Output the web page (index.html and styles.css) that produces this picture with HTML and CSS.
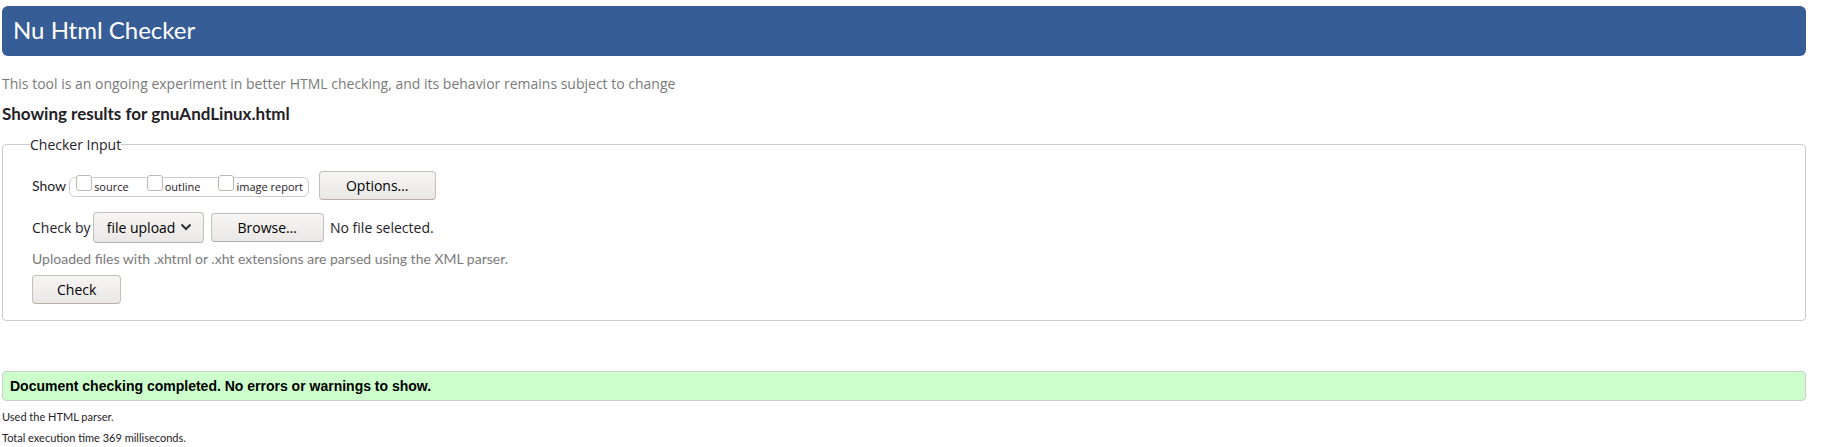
FILE: index.html
```html
<!DOCTYPE html>
<html lang="en">
<head>
<meta charset="utf-8">
<title>Nu Html Checker</title>
<link rel="stylesheet" href="styles.css">
</head>
<body>
<header class="banner"><h1 class="banner-title">Nu Html Checker</h1></header>
<main>
  <p class="intro">This tool is an ongoing experiment in better HTML checking, and its behavior remains subject to change</p>
  <h2 class="results-title">Showing results for gnuAndLinux.html</h2>
  <form class="checker">
    <fieldset class="panel">
      <legend class="panel-legend">Checker Input</legend>
      <div class="row">
        <span class="row-label show-label">Show</span>
        <div class="checks" role="group" aria-label="Show">
          <label class="check"><input class="box" type="checkbox"><span class="check-text">source</span></label>
          <label class="check"><input class="box" type="checkbox"><span class="check-text">outline</span></label>
          <label class="check"><input class="box" type="checkbox"><span class="check-text">image report</span></label>
        </div>
        <button class="button options" type="button">Options…</button>
      </div>
      <div class="row input-row">
        <label class="row-label" for="method">Check by</label>
        <span class="select-wrap">
          <select class="method" id="method"><option>file upload</option></select>
          <svg class="chevron" viewBox="0 0 12 8" aria-hidden="true"><path d="M1.500 1.500 6 6l4.500-4.500"/></svg>
        </span>
        <input class="file-input" id="file" type="file">
        <label class="button browse" for="file">Browse…</label>
        <span class="file-name">No file selected.</span>
      </div>
      <p class="hint">Uploaded files with .xhtml or .xht extensions are parsed using the XML parser.</p>
      <button class="button submit" type="submit">Check</button>
    </fieldset>
  </form>
  <p class="success">Document checking completed. No errors or warnings to show.</p>
  <p class="detail">Used the HTML parser.</p>
  <p class="detail">Total execution time 369 milliseconds.</p>
</main>
</body>
</html>
```
FILE: styles.css
```css
* { box-sizing: border-box; }
body {
  margin: 0;
  padding: 6px 15px 0 2px;
  background: #fff;
  color: #1f2126;
  font: 14px/20px "Open Sans", sans-serif;
}
h1, h2, p { margin: 0; }
.banner {
  padding: 8px 11px 10px;
  border-radius: 6px;
  background: #365d95;
  color: #fff;
}
.banner-title { font: 400 24px/32px Lato, sans-serif; }
.intro { margin-top: 18px; color: #7a7a7a; }
.results-title { margin-top: 10px; font: 700 17px/20px Lato, sans-serif; }
.checker { margin-top: 9px; }
.panel {
  min-width: 0;
  margin: 0;
  padding: 16px 29px;
  border: 1px solid #ccc;
  border-radius: 4px;
}
.panel-legend { margin-left: -2px; padding: 2px 0 0; }
.row { display: flex; align-items: center; }
.show-label { font-family: Lato, sans-serif; }
.checks {
  display: flex;
  align-items: center;
  gap: 18px;
  height: 20px;
  margin: 3px 10px 0 3px;
  padding: 0 5px 0 6px;
  border: 1px solid #ccc;
  border-radius: 6px;
}
.check { display: flex; align-items: center; gap: 2px; }
.box {
  appearance: none;
  width: 16px;
  height: 16px;
  margin: 0 0 8px;
  border: 1px solid #bfb8b1;
  border-radius: 3px;
  background: #fff;
}
.check-text { font-size: 11px; }
.button, .method {
  height: 29px;
  border: 1px solid #c3c0bb;
  border-bottom-color: #b5afa8;
  border-radius: 4px;
  background: linear-gradient(#f6f5f4, #e9e8e7);
  color: #000;
  font: 14px/27px "Open Sans", sans-serif;
  text-align: center;
}
.button { padding: 0 24px; }
.options, .browse { padding: 0 26px; }
.input-row { margin-top: 12px; }
.select-wrap { display: flex; position: relative; margin: 0 7px 0 2px; }
.method { appearance: none; height: 31px; padding: 0 27px 0 13px; }
.chevron {
  position: absolute;
  top: 11px;
  right: 12px;
  width: 12px;
  height: 8px;
  fill: none;
  stroke: #2e3436;
  stroke-width: 2;
  pointer-events: none;
}
.file-input { position: absolute; width: 1px; height: 1px; opacity: 0; }
.file-name { margin-left: 6px; }
.hint { margin: 6px 0; color: #7a7a7a; font: 14px/20px Lato, sans-serif; }
.submit { display: block; }
.success {
  margin-top: 50px;
  padding: 3px 7px;
  border: 1px solid #ccc;
  border-radius: 4px;
  background: #cfc;
  color: #000;
  font: 700 14px/22px "Liberation Sans", sans-serif;
}
.detail { margin-top: 6px; font: 11px/15px Lato, sans-serif; }
.success + .detail { margin-top: 8px; }
```
